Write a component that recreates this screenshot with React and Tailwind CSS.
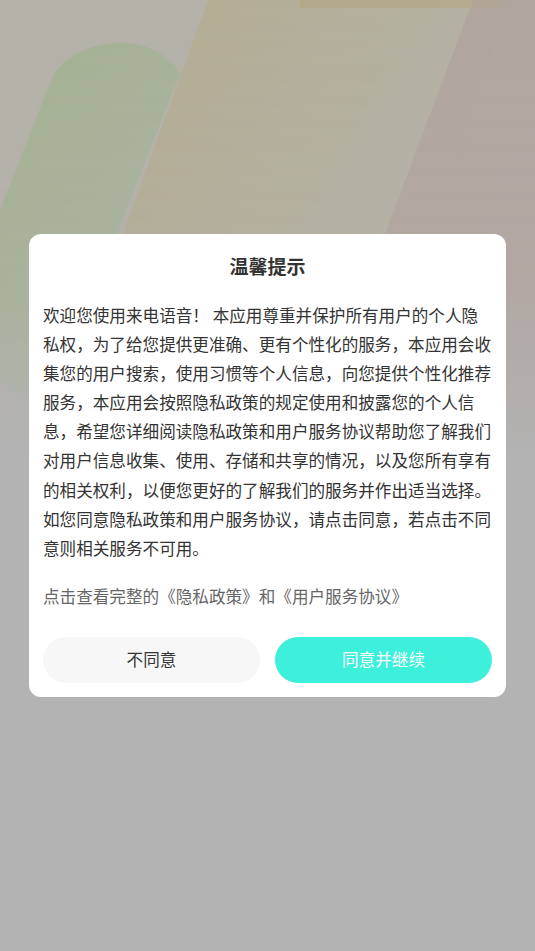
import React from 'react';

const bodyText =
  '欢迎您使用来电语音！ 本应用尊重并保护所有用户的个人隐私权，为了给您提供更准确、更有个性化的服务，本应用会收集您的用户搜索，使用习惯等个人信息，向您提供个性化推荐服务，本应用会按照隐私政策的规定使用和披露您的个人信息，希望您详细阅读隐私政策和用户服务协议帮助您了解我们对用户信息收集、使用、存储和共享的情况，以及您所有享有的相关权利，以便您更好的了解我们的服务并作出适当选择。如您同意隐私政策和用户服务协议，请点击同意，若点击不同意则相关服务不可用。';

function Backdrop() {
  return (
    <svg className="absolute inset-0 w-full h-full" viewBox="0 0 535 951" preserveAspectRatio="none">
      <defs>
        <linearGradient id="fade" x1="0" y1="0" x2="0" y2="1">
          <stop offset="0" stopColor="#fff" stopOpacity="1" />
          <stop offset="0.3" stopColor="#fff" stopOpacity="0.85" />
          <stop offset="0.48" stopColor="#fff" stopOpacity="0" />
        </linearGradient>
        <mask id="m">
          <rect x="0" y="0" width="535" height="951" fill="url(#fade)" />
        </mask>
        <linearGradient id="tan" x1="0" y1="0" x2="1" y2="0.4">
          <stop offset="0" stopColor="#b3ab88" />
          <stop offset="1" stopColor="#b4b2aa" />
        </linearGradient>
        <linearGradient id="green" x1="0" y1="0" x2="1" y2="1">
          <stop offset="0" stopColor="#a4b190" />
          <stop offset="1" stopColor="#abb3a2" />
        </linearGradient>
      </defs>
      <rect x="0" y="0" width="535" height="951" fill="#b3b3b3" />
      <g mask="url(#m)">
        <rect x="0" y="0" width="535" height="460" fill="#b4b1a8" />
        <polygon points="208,0 535,0 535,460 40,460" fill="url(#tan)" opacity="0.9" />
        <polygon points="300,0 505,0 505,8 300,8" fill="#b2a882" opacity="0.7" />
        <polygon points="473,0 535,0 535,460 300,460" fill="#b0a49b" opacity="0.8" />
        <polygon points="505,0 535,0 535,460 380,460" fill="#b1a5a2" opacity="0.5" />
        <path d="M52,78 C70,40 150,25 180,73 L60,380 C50,400 10,400 0,380 L0,210 Z" fill="url(#green)" />
      </g>
    </svg>
  );
}

export default function App() {
  return (
    <div
      className="relative min-h-screen w-full overflow-hidden"
      style={{ fontFamily: '"Noto Sans CJK SC", "Noto Sans", sans-serif' }}
    >
      <Backdrop />
      <div className="relative flex justify-center pt-[234px]">
        <div className="w-[477px] rounded-[12px] bg-white px-[14px] pt-[19px] pb-[14px]">
          <h2 className="text-center text-[19px] leading-[26px] font-bold text-[#333]">温馨提示</h2>
          <p className="mt-[22px] text-[16.6px] leading-[29.1px] text-[#333] break-all">{bodyText}</p>
          <p className="mt-[19px] text-[16.6px] leading-[29px] text-[#666]">
            点击查看完整的《隐私政策》和《用户服务协议》
          </p>
          <div className="mt-[26px] flex gap-[15px]">
            <button className="flex-1 h-[46px] rounded-full bg-[#f7f7f7] text-[16.6px] text-[#333]">
              不同意
            </button>
            <button className="flex-1 h-[46px] rounded-full bg-[#3cf0dc] text-[16.6px] text-white">
              同意并继续
            </button>
          </div>
        </div>
      </div>
    </div>
  );
}
